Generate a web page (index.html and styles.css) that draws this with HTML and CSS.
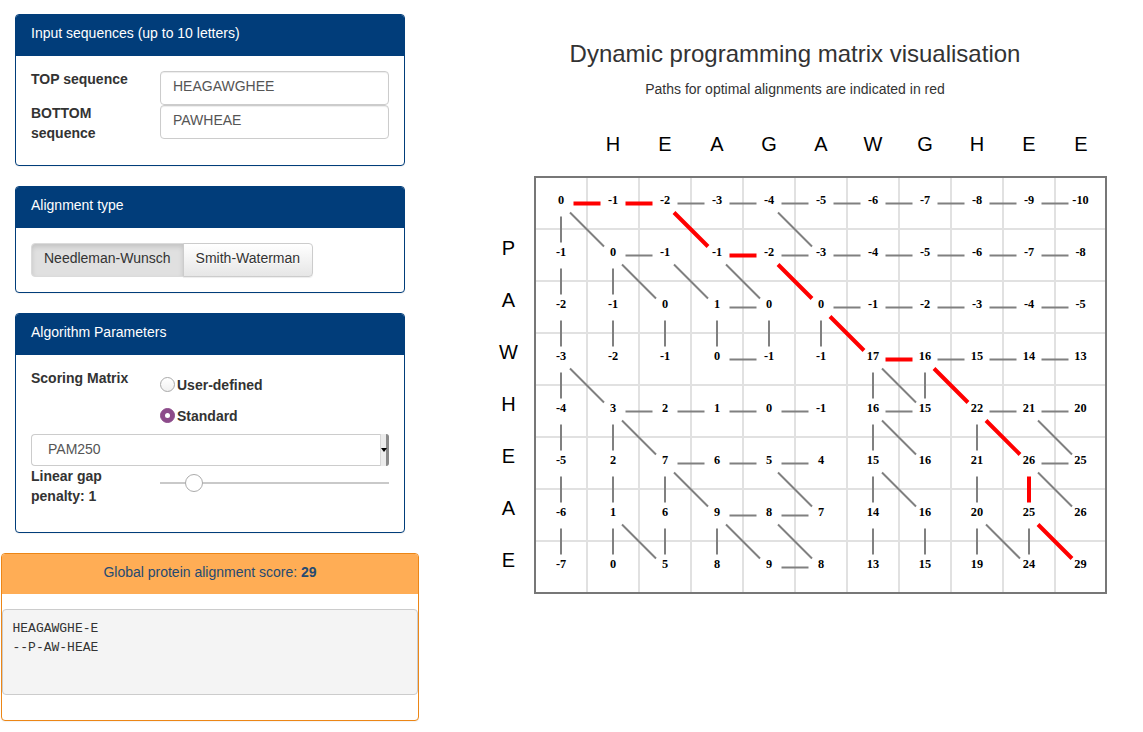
FILE: index.html
```html
<!DOCTYPE html>
<html>
<head>
<meta charset="utf-8">
<title>Dynamic programming matrix visualisation</title>
<link rel="stylesheet" href="styles.css">
</head>
<body>
<div class="page">
  <aside class="side">
    <section class="panel">
      <div class="panel-head">Input sequences (up to 10 letters)</div>
      <div class="panel-body seq-body">
        <div class="form-row">
          <label class="lbl">TOP sequence</label>
          <div class="input">HEAGAWGHEE</div>
        </div>
        <div class="form-row">
          <label class="lbl">BOTTOM sequence</label>
          <div class="input">PAWHEAE</div>
        </div>
      </div>
    </section>

    <section class="panel">
      <div class="panel-head">Alignment type</div>
      <div class="panel-body">
        <div class="btn-group">
          <span class="btn active">Needleman-Wunsch</span>
          <span class="btn plain">Smith-Waterman</span>
        </div>
      </div>
    </section>

    <section class="panel">
      <div class="panel-head">Algorithm Parameters</div>
      <div class="panel-body params-body">
        <div class="form-row">
          <label class="lbl">Scoring Matrix</label>
          <div class="radios">
            <div class="radio"><span class="dot"></span>User-defined</div>
            <div class="radio"><span class="dot checked"></span>Standard</div>
          </div>
        </div>
        <div class="select">
          <span class="select-text">PAM250</span>
          <span class="select-btn"></span>
        </div>
        <div class="form-row gap-row">
          <label class="lbl">Linear gap penalty: 1</label>
          <div class="slider">
            <div class="track"><span class="thumb"></span></div>
          </div>
        </div>
      </div>
    </section>

    <section class="panel panel-result">
      <div class="panel-head result-head">Global protein alignment score: <b>29</b></div>
      <div class="result-body">
<pre class="aln">HEAGAWGHE-E
--P-AW-HEAE</pre>
      </div>
    </section>
  </aside>

  <main class="main">
    <h1 class="title">Dynamic programming matrix visualisation</h1>
    <p class="subtitle">Paths for optimal alignments are indicated in red</p>

    <div class="dp">
      <div class="col-head">
        <span></span><span>H</span><span>E</span><span>A</span><span>G</span><span>A</span><span>W</span><span>G</span><span>H</span><span>E</span><span>E</span>
      </div>
      <div class="dp-body">
        <div class="row-head">
          <span></span><span>P</span><span>A</span><span>W</span><span>H</span><span>E</span><span>A</span><span>E</span>
        </div>
        <div class="box">
          <span class="c">0</span><span class="c">-1</span><span class="c">-2</span><span class="c">-3</span><span class="c">-4</span><span class="c">-5</span><span class="c">-6</span><span class="c">-7</span><span class="c">-8</span><span class="c">-9</span><span class="c">-10</span>
          <span class="c">-1</span><span class="c">0</span><span class="c">-1</span><span class="c">-1</span><span class="c">-2</span><span class="c">-3</span><span class="c">-4</span><span class="c">-5</span><span class="c">-6</span><span class="c">-7</span><span class="c">-8</span>
          <span class="c">-2</span><span class="c">-1</span><span class="c">0</span><span class="c">1</span><span class="c">0</span><span class="c">0</span><span class="c">-1</span><span class="c">-2</span><span class="c">-3</span><span class="c">-4</span><span class="c">-5</span>
          <span class="c">-3</span><span class="c">-2</span><span class="c">-1</span><span class="c">0</span><span class="c">-1</span><span class="c">-1</span><span class="c">17</span><span class="c">16</span><span class="c">15</span><span class="c">14</span><span class="c">13</span>
          <span class="c">-4</span><span class="c">3</span><span class="c">2</span><span class="c">1</span><span class="c">0</span><span class="c">-1</span><span class="c">16</span><span class="c">15</span><span class="c">22</span><span class="c">21</span><span class="c">20</span>
          <span class="c">-5</span><span class="c">2</span><span class="c">7</span><span class="c">6</span><span class="c">5</span><span class="c">4</span><span class="c">15</span><span class="c">16</span><span class="c">21</span><span class="c">26</span><span class="c">25</span>
          <span class="c">-6</span><span class="c">1</span><span class="c">6</span><span class="c">9</span><span class="c">8</span><span class="c">7</span><span class="c">14</span><span class="c">16</span><span class="c">20</span><span class="c">25</span><span class="c">26</span>
          <span class="c">-7</span><span class="c">0</span><span class="c">5</span><span class="c">8</span><span class="c">9</span><span class="c">8</span><span class="c">13</span><span class="c">15</span><span class="c">19</span><span class="c">24</span><span class="c">29</span>
          <svg class="links" viewBox="0 0 572 416" width="572" height="416" aria-hidden="true">
            <path class="link-gray" d="M141.5 25.5h27M193.5 25.5h27M245.5 25.5h27M297.5 25.5h27M349.5 25.5h27M401.5 25.5h27M453.5 25.5h27M505.5 25.5h27
              M89.5 77.5h27M245.5 77.5h27M297.5 77.5h27M349.5 77.5h27M401.5 77.5h27M453.5 77.5h27M505.5 77.5h27
              M193.5 129.5h27M297.5 129.5h27M349.5 129.5h27M401.5 129.5h27M453.5 129.5h27M505.5 129.5h27
              M193.5 181.5h27M401.5 181.5h27M453.5 181.5h27M505.5 181.5h27
              M89.5 233.5h27M141.5 233.5h27M193.5 233.5h27M245.5 233.5h27M349.5 233.5h27M453.5 233.5h27M505.5 233.5h27
              M141.5 285.5h27M193.5 285.5h27M245.5 285.5h27M505.5 285.5h27
              M193.5 337.5h27M245.5 337.5h27
              M245.5 389.5h27
              M25 38.5v26
              M25 90.5v26M77 90.5v26
              M25 142.5v26M77 142.5v26M129 142.5v26M181 142.5v26M233 142.5v26M285 142.5v26
              M25 194.5v26M337 194.5v26M389 194.5v26
              M25 246.5v26M77 246.5v26M337 246.5v26M441 246.5v26
              M25 298.5v26M77 298.5v26M129 298.5v26M337 298.5v26M441 298.5v26
              M25 350.5v26M77 350.5v26M129 350.5v26M181 350.5v26M337 350.5v26M389 350.5v26M441 350.5v26M493 350.5v26
              M34 34.5l34 34M242 34.5l34 34
              M86 86.5l34 34M138 86.5l34 34M190 86.5l34 34
              M34 190.5l34 34M346 190.5l34 34
              M86 242.5l34 34M346 242.5l34 34M502 242.5l34 34
              M138 294.5l34 34M242 294.5l34 34M346 294.5l34 34M502 294.5l34 34
              M86 346.5l34 34M190 346.5l34 34M242 346.5l34 34M450 346.5l34 34"/>
            <path class="link-red" d="M37.5 25.5h27M89.5 25.5h27M193.5 77.5h27M349.5 181.5h27
              M138 34.5l34 34M242 86.5l34 34M294 138.5l34 34M398 190.5l34 34M450 242.5l34 34M502 346.5l34 34
              M493 298.5v26"/>
          </svg>
        </div>
      </div>
    </div>
  </main>
</div>
</body>
</html>
```

FILE: styles.css
```css
html, body {
  margin: 0;
  padding: 0;
  background: #fff;
}

body {
  font-family: "Liberation Sans", Arial, sans-serif;
  font-size: 14px;
  line-height: 20px;
  color: #333;
}

.page {
  display: flex;
  align-items: flex-start;
}

/* ---------- sidebar ---------- */
.side {
  flex: none;
  width: 420px;
  padding-top: 14px;
}

.panel {
  width: 390px;
  margin: 0 0 20px 15px;
  box-sizing: border-box;
  border: 1px solid #013d7a;
  border-radius: 4px;
  background: #fff;
  box-shadow: 0 1px 1px rgba(0, 0, 0, 0.05);
}

.panel-head {
  background: #013d7a;
  color: #fff;
  padding: 8px 15px 12px;
  border-bottom: 1px solid #013d7a;
  border-radius: 3px 3px 0 0;
}

.panel-body {
  padding: 15px;
}

.seq-body {
  padding-bottom: 22px;
}

.form-row {
  display: flex;
  align-items: flex-start;
}

.lbl {
  flex: 0 0 129px;
  box-sizing: border-box;
  padding-right: 15px;
  margin-top: -2px;
  font-weight: bold;
}

.input {
  flex: 1;
  height: 34px;
  box-sizing: border-box;
  padding: 4px 12px 8px;
  border: 1px solid #ccc;
  border-radius: 4px;
  color: #555;
  box-shadow: inset 0 1px 1px rgba(0, 0, 0, 0.075);
}

/* buttons */
.btn-group {
  display: inline-flex;
}

.btn {
  height: 34px;
  box-sizing: border-box;
  padding: 4px 12px 8px;
  border: 1px solid #ccc;
  color: #333;
}

.btn.active {
  background: #e0e0e0;
  border-color: #dbdbdb;
  border-radius: 4px 0 0 4px;
  box-shadow: inset 0 3px 5px rgba(0, 0, 0, 0.125);
}

.btn.plain {
  margin-left: -1px;
  background: linear-gradient(#fff, #e6e6e6);
  border-radius: 0 4px 4px 0;
  text-shadow: 0 1px 0 #fff;
  box-shadow: 0 1px 1px rgba(0, 0, 0, 0.075);
}

/* parameters */
.params-body {
  padding-bottom: 26px;
}

.radios {
  flex: 1;
  display: flex;
  flex-direction: column;
  gap: 11px;
  padding-top: 5px;
}

.radio {
  display: flex;
  align-items: center;
  height: 20px;
  font-weight: bold;
}

.dot {
  width: 15px;
  height: 15px;
  box-sizing: border-box;
  margin: -2px 2px 0 0;
  border-radius: 50%;
  border: 1px solid #a9a9a9;
  background: linear-gradient(#fff, #f0f0f0);
  display: flex;
  align-items: center;
  justify-content: center;
}

.dot.checked {
  border-color: #8c4a8a;
  background: #8c4a8a;
}

.dot.checked::after {
  content: "";
  width: 5px;
  height: 5px;
  border-radius: 50%;
  background: #fff;
}

.select {
  margin-top: 8px;
  height: 32px;
  box-sizing: border-box;
  display: flex;
  align-items: center;
  padding-left: 16px;
  padding-bottom: 3px;
  border: 1px solid #ccc;
  border-right: 0;
  border-radius: 4px;
  color: #555;
}

.select-text {
  flex: 1;
}

.select-btn {
  align-self: stretch;
  width: 5px;
  margin: -1px 0 -4px;
  background: #ececec;
  border-left: 1px solid #d6d6d6;
  border-right: 3px solid #8a8a8a;
  border-radius: 0 3px 3px 0;
  display: flex;
  align-items: center;
  justify-content: center;
}

.select-btn::before {
  content: "";
  border-left: 3px solid transparent;
  border-right: 3px solid transparent;
  border-top: 4px solid #000;
}

.gap-row {
  margin-top: 2px;
}

.slider {
  flex: 1;
  padding-top: 14px;
}

.track {
  position: relative;
  height: 2px;
  background: #c9c9c9;
}

.thumb {
  position: absolute;
  left: 25px;
  top: -8px;
  width: 18px;
  height: 18px;
  box-sizing: border-box;
  border-radius: 50%;
  border: 1px solid #ababab;
  background: #fff;
}

/* result */
.panel-result {
  width: 418px;
  margin-left: 1px;
  border-color: #ec8616;
}

.result-head {
  background: #ffad55;
  border-bottom: 0;
  color: #254a72;
  text-align: center;
}

.result-body {
  padding: 15px 0;
}

.aln {
  margin: 0 0 10px;
  height: 86px;
  box-sizing: border-box;
  padding: 10px 9.5px 9px;
  font-family: "Liberation Mono", monospace;
  font-size: 13px;
  line-height: 18.5px;
  color: #333;
  background: #f4f4f4;
  border: 1px solid #ccc;
  border-radius: 4px;
}

/* ---------- main ---------- */
.main {
  flex: none;
  width: 696px;
  margin-left: 27px;
  padding-top: 41px;
  text-align: center;
}

.title {
  margin: 0;
  font-size: 24px;
  line-height: 26px;
  font-weight: normal;
  color: #333;
}

.subtitle {
  margin: 12px 0 0;
  font-size: 14px;
  line-height: 20px;
}

.dp {
  margin: 35px 0 0 36px;
  text-align: left;
}

.col-head {
  display: flex;
  height: 20px;
  margin-bottom: 22px;
  padding-left: 53px;
  font-size: 20px;
  line-height: 20px;
  color: #000;
}

.col-head span {
  flex: none;
  width: 52px;
  box-sizing: border-box;
  padding-right: 2px;
  text-align: center;
}

.dp-body {
  display: flex;
  align-items: flex-start;
}

.row-head {
  flex: none;
  width: 51px;
  padding-top: 2px;
  font-size: 20px;
  line-height: 20px;
  color: #000;
  text-align: center;
}

.row-head span {
  display: block;
  height: 52px;
  box-sizing: border-box;
  padding-top: 8px;
}

.box {
  position: relative;
  display: grid;
  grid-template-columns: repeat(10, 52px) 49px;
  grid-template-rows: repeat(7, 52px) 50px;
  border: 2px solid #777;
}

.c {
  box-sizing: border-box;
  padding-top: 15px;
  border-right: 2px solid #e1e1e1;
  border-bottom: 2px solid #e1e1e1;
  text-align: center;
  font-family: "Liberation Serif", "Times New Roman", serif;
  font-weight: bold;
  font-size: 12.3px;
  line-height: 14px;
  color: #000;
}

.c:nth-child(11n) {
  border-right: 0;
}

.c:nth-child(n+78) {
  border-bottom: 0;
}

.links {
  position: absolute;
  left: 0;
  top: 0;
  overflow: visible;
  pointer-events: none;
}

.link-gray {
  fill: none;
  stroke: #808080;
  stroke-width: 2;
}

.link-red {
  fill: none;
  stroke: #ff0000;
  stroke-width: 4;
}
```
